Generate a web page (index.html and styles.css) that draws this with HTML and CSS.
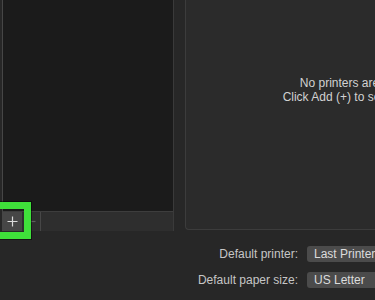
FILE: index.html
```html
<!DOCTYPE html>
<html lang="en">
<head>
    <meta charset="UTF-8">
    <meta name="viewport" content="width=device-width, initial-scale=1.0">
    <title>Printers &amp; Scanners</title>
    <link rel="stylesheet" href="styles.css">
</head>
<body>

<div class="window">
    <div class="top">
        <div class="sidebar">
            <div class="list"></div>
            <div class="toolbar">
                <button class="tool add">
                    <svg width="11" height="11" viewBox="0 0 11 11"><path d="M5.5 0.5v10M0.5 5.5h10" stroke="#dadada" stroke-width="1.2"/></svg>
                </button>
                <button class="tool remove">
                    <svg width="9" height="3" viewBox="0 0 9 3"><path d="M0.5 1.5h8" stroke="#5e5e5e" stroke-width="1.2"/></svg>
                </button>
                <div class="divider"></div>
            </div>
        </div>

        <div class="panel">
            <p>No printers are available.</p>
            <p>Click Add (+) to set up a printer.</p>
        </div>
    </div>

    <div class="defaults">
        <span class="label">Default printer:</span>
        <span class="popup">Last Printer Used</span>
        <span class="label">Default paper size:</span>
        <span class="popup">US Letter</span>
    </div>
</div>

<!-- highlight around the Add button -->
<div class="highlight"></div>

</body>
</html>
```

FILE: styles.css
```css
html, body {
    margin: 0;
    height: 100%;
    overflow: hidden;
}
body {
    background-color: #272727;
    font-family: "Liberation Sans", Arial, sans-serif;
    font-size: 12px;
    color: #cfcfcf;
    position: relative;
}
.window {
    width: 600px;
}
.top {
    display: flex;
    height: 231px;
}
.sidebar {
    margin-left: 2px;
    width: 170px;
    border-left: 1px solid #464646;
    border-right: 1px solid #3a3a3a;
    display: flex;
    flex-direction: column;
}
.list {
    height: 211px;
    background-color: #1b1b1b;
}
.toolbar {
    flex-grow: 1;
    display: flex;
    align-items: stretch;
    background-color: #2e2e2e;
    border-top: 1px solid #3d3d3d;
}
.tool {
    border: none;
    padding: 0;
    margin: 0;
    background: none;
    display: flex;
    align-items: center;
    justify-content: center;
}
.tool.add {
    width: 19px;
    background-color: #464646;
}
.tool.remove {
    width: 18px;
}
.divider {
    width: 1px;
    background-color: #474747;
}
.panel {
    margin-left: 11px;
    width: 362px;
    height: 230px;
    box-sizing: border-box;
    background-color: #2b2b2b;
    border-left: 1px solid #3c3c3c;
    border-bottom: 1px solid #3c3c3c;
    border-bottom-left-radius: 4px;
    padding-top: 76px;
    text-align: center;
    color: #d2d2d2;
}
.panel p {
    margin: 0;
    line-height: 14px;
    white-space: nowrap;
}
.defaults {
    display: grid;
    grid-template-columns: 298px 140px;
    column-gap: 9px;
    row-gap: 10px;
    padding-top: 15px;
}
.label {
    text-align: right;
    line-height: 16px;
    color: #c6c6c6;
}
.popup {
    height: 16px;
    line-height: 16px;
    padding-left: 7px;
    background-color: #4b4b4b;
    border-radius: 3px;
    color: #dcdcdc;
    white-space: nowrap;
}
.highlight {
    position: absolute;
    left: -12px;
    top: 202px;
    width: 43px;
    height: 37px;
    box-sizing: border-box;
    border: 7px solid #3fe03a;
    box-shadow: 0 0 0 1px rgba(0, 0, 0, 0.45);
}
```
